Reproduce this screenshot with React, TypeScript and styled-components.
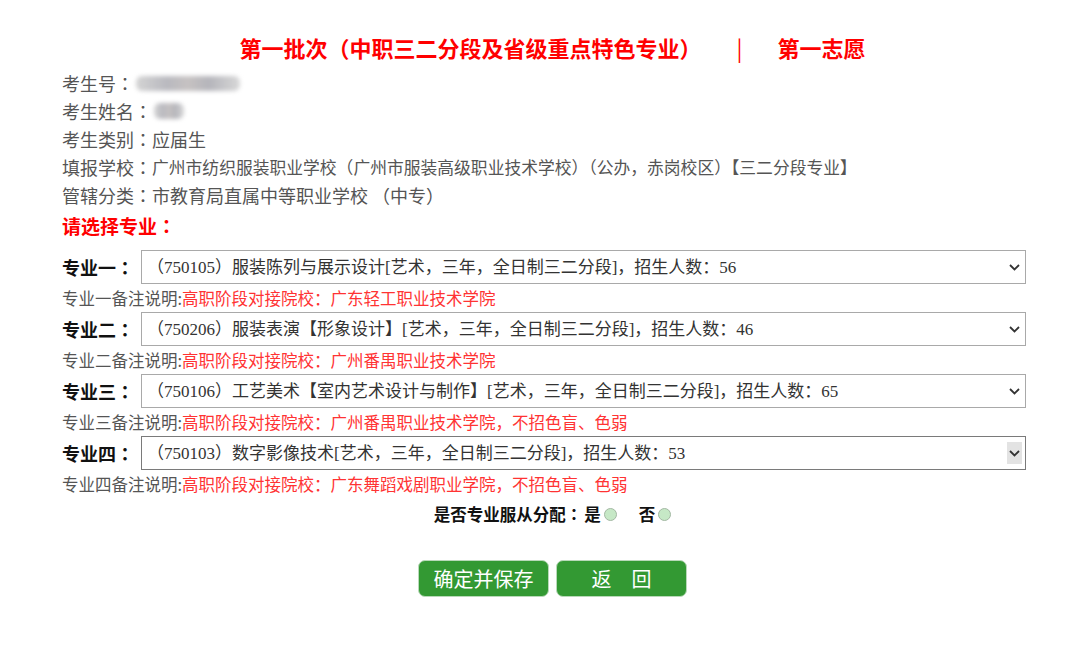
import React from 'react';
import styled, { createGlobalStyle } from 'styled-components';

const GlobalStyle = createGlobalStyle`
  html, body {
    margin: 0;
    padding: 0;
    background: #fff;
  }
  body {
    font-family: "Noto Sans CJK SC", "Noto Sans", sans-serif;
    color: #555;
  }
`;

// data
const majors = [
  {
    no: '一',
    text: '（750105）服装陈列与展示设计[艺术，三年，全日制三二分段]，招生人数：56',
    note: '高职阶段对接院校：广东轻工职业技术学院',
  },
  {
    no: '二',
    text: '（750206）服装表演【形象设计】[艺术，三年，全日制三二分段]，招生人数：46',
    note: '高职阶段对接院校：广州番禺职业技术学院',
  },
  {
    no: '三',
    text: '（750106）工艺美术【室内艺术设计与制作】[艺术，三年，全日制三二分段]，招生人数：65',
    note: '高职阶段对接院校：广州番禺职业技术学院，不招色盲、色弱',
  },
  {
    no: '四',
    text: '（750103）数字影像技术[艺术，三年，全日制三二分段]，招生人数：53',
    note: '高职阶段对接院校：广东舞蹈戏剧职业学院，不招色盲、色弱',
    hover: true,
  },
];

// Style
const Page = styled.div`
  width: 1080px;
  padding-top: 32px;
`;

const Title = styled.h1`
  margin: 0;
  padding-left: 25px;
  display: flex;
  justify-content: center;
  gap: 35px;
  font-size: 22px;
  line-height: 30px;
  font-weight: bold;
  color: #ff0000;
  span.bar {
    font-weight: normal;
  }
`;

const Info = styled.div`
  margin-top: 7px;
  padding-left: 62px;
`;

const InfoLine = styled.div`
  display: flex;
  align-items: center;
  font-size: 18px;
  line-height: 28px;
  color: #555;
  white-space: nowrap;
`;

// full-width colon drawn centred, as on the original page
const Colon = styled.span`
  font-family: "Noto Sans CJK JP", "Noto Sans CJK SC", sans-serif;
`;

const Value = styled.span<{ $size?: number }>`
  font-size: ${(p) => p.$size || 18}px;
`;

const Blur = styled.span<{ $w: number; $h: number }>`
  display: inline-block;
  width: ${(p) => p.$w}px;
  height: ${(p) => p.$h}px;
  margin-left: 2px;
  border-radius: 6px;
  background: linear-gradient(90deg, #d4d4d4, #b9b9bf 30%, #c6c2c2 50%, #b5b5bb 70%, #d8d8d8);
  filter: blur(2px);
`;

const Prompt = styled.div`
  margin-top: 3px;
  font-size: 19px;
  line-height: 28px;
  font-weight: bold;
  color: #ff0000;
`;

const Majors = styled.div`
  margin-top: 10px;
  padding: 0 54px 0 62px;
`;

const Row = styled.div`
  display: flex;
  align-items: center;
  height: 34px;
`;

const Label = styled.label`
  width: 79px;
  flex: none;
  font-size: 18px;
  font-weight: bold;
  color: #111;
  white-space: nowrap;
`;

const SelectWrap = styled.div`
  position: relative;
  flex: 1;
  height: 34px;
`;

const Select = styled.select<{ $hover?: boolean }>`
  appearance: none;
  width: 100%;
  height: 34px;
  margin: 0;
  padding: 0 30px 0 5px;
  border: 1px solid ${(p) => (p.$hover ? '#7a7a7a' : '#a9a9a9')};
  border-radius: 0;
  background: #fff;
  font-family: "Liberation Serif", "Noto Sans CJK SC", serif;
  font-size: 17px;
  color: #333;
  outline: none;
`;

const Arrow = styled.span<{ $hover?: boolean }>`
  position: absolute;
  right: 4px;
  top: 6px;
  width: 15px;
  height: 22px;
  display: flex;
  align-items: center;
  justify-content: center;
  background: ${(p) => (p.$hover ? '#e3e3e3' : 'transparent')};
  pointer-events: none;
`;

const Note = styled.div`
  font-size: 16.5px;
  line-height: 28px;
  color: #555;
  white-space: nowrap;
  span {
    color: #ff3333;
  }
`;

const Obey = styled.div`
  margin-top: 2px;
  padding-left: 25px;
  display: flex;
  justify-content: center;
  align-items: center;
  font-size: 16.5px;
  line-height: 28px;
  font-weight: bold;
  color: #111;
`;

const Option = styled.label`
  display: inline-flex;
  align-items: center;
  gap: 3px;
  margin-left: 2px;
  & + & {
    margin-left: 22px;
  }
`;

const Radio = styled.span`
  display: inline-block;
  width: 11px;
  height: 11px;
  border: 1px solid #a3b8a3;
  border-radius: 50%;
  background: #c6e8c6;
`;

const Buttons = styled.div`
  margin-top: 32px;
  padding-left: 25px;
  display: flex;
  justify-content: center;
  gap: 7px;
`;

const Button = styled.button`
  width: 131px;
  height: 37px;
  border: 1px solid #b9d9b9;
  border-radius: 7px;
  background: #339933;
  color: #fff;
  font-family: "Noto Sans CJK SC", sans-serif;
  font-size: 20px;
  cursor: pointer;
`;

function Chevron() {
  return (
    <svg width="11" height="7" viewBox="0 0 11 7">
      <path d="M1 1 L5.5 5.5 L10 1" fill="none" stroke="#333" strokeWidth="1.8" />
    </svg>
  );
}

// Component
function App() {
  return (
    <>
      <GlobalStyle />
      <Page>
        <Title>
          <span>第一批次（中职三二分段及省级重点特色专业）</span>
          <span className="bar">|</span>
          <span>第一志愿</span>
        </Title>
        <Info>
          <InfoLine>
            考生号<Colon>：</Colon>
            <Blur $w={104} $h={15} />
          </InfoLine>
          <InfoLine>
            考生姓名<Colon>：</Colon>
            <Blur $w={30} $h={16} />
          </InfoLine>
          <InfoLine>
            考生类别<Colon>：</Colon>应届生
          </InfoLine>
          <InfoLine>
            填报学校<Colon>：</Colon>
            <Value $size={16.8}>
              广州市纺织服装职业学校（广州市服装高级职业技术学校）（公办，赤岗校区）【三二分段专业】
            </Value>
          </InfoLine>
          <InfoLine>
            管辖分类<Colon>：</Colon>市教育局直属中等职业学校&nbsp;（中专）
          </InfoLine>
          <Prompt>
            请选择专业<Colon>：</Colon>
          </Prompt>
        </Info>
        <Majors>
          {majors.map((m) => (
            <div key={m.no}>
              <Row>
                <Label>
                  专业{m.no}
                  <Colon>：</Colon>
                </Label>
                <SelectWrap>
                  <Select $hover={m.hover} defaultValue={m.text}>
                    <option value={m.text}>{m.text}</option>
                  </Select>
                  <Arrow $hover={m.hover}>
                    <Chevron />
                  </Arrow>
                </SelectWrap>
              </Row>
              <Note>
                专业{m.no}备注说明:<span>{m.note}</span>
              </Note>
            </div>
          ))}
        </Majors>
        <Obey>
          是否专业服从分配<Colon>：</Colon>
          <Option>
            是<Radio />
          </Option>
          <Option>
            否<Radio />
          </Option>
        </Obey>
        <Buttons>
          <Button>确定并保存</Button>
          <Button>返　回</Button>
        </Buttons>
      </Page>
    </>
  );
}

export default App;
